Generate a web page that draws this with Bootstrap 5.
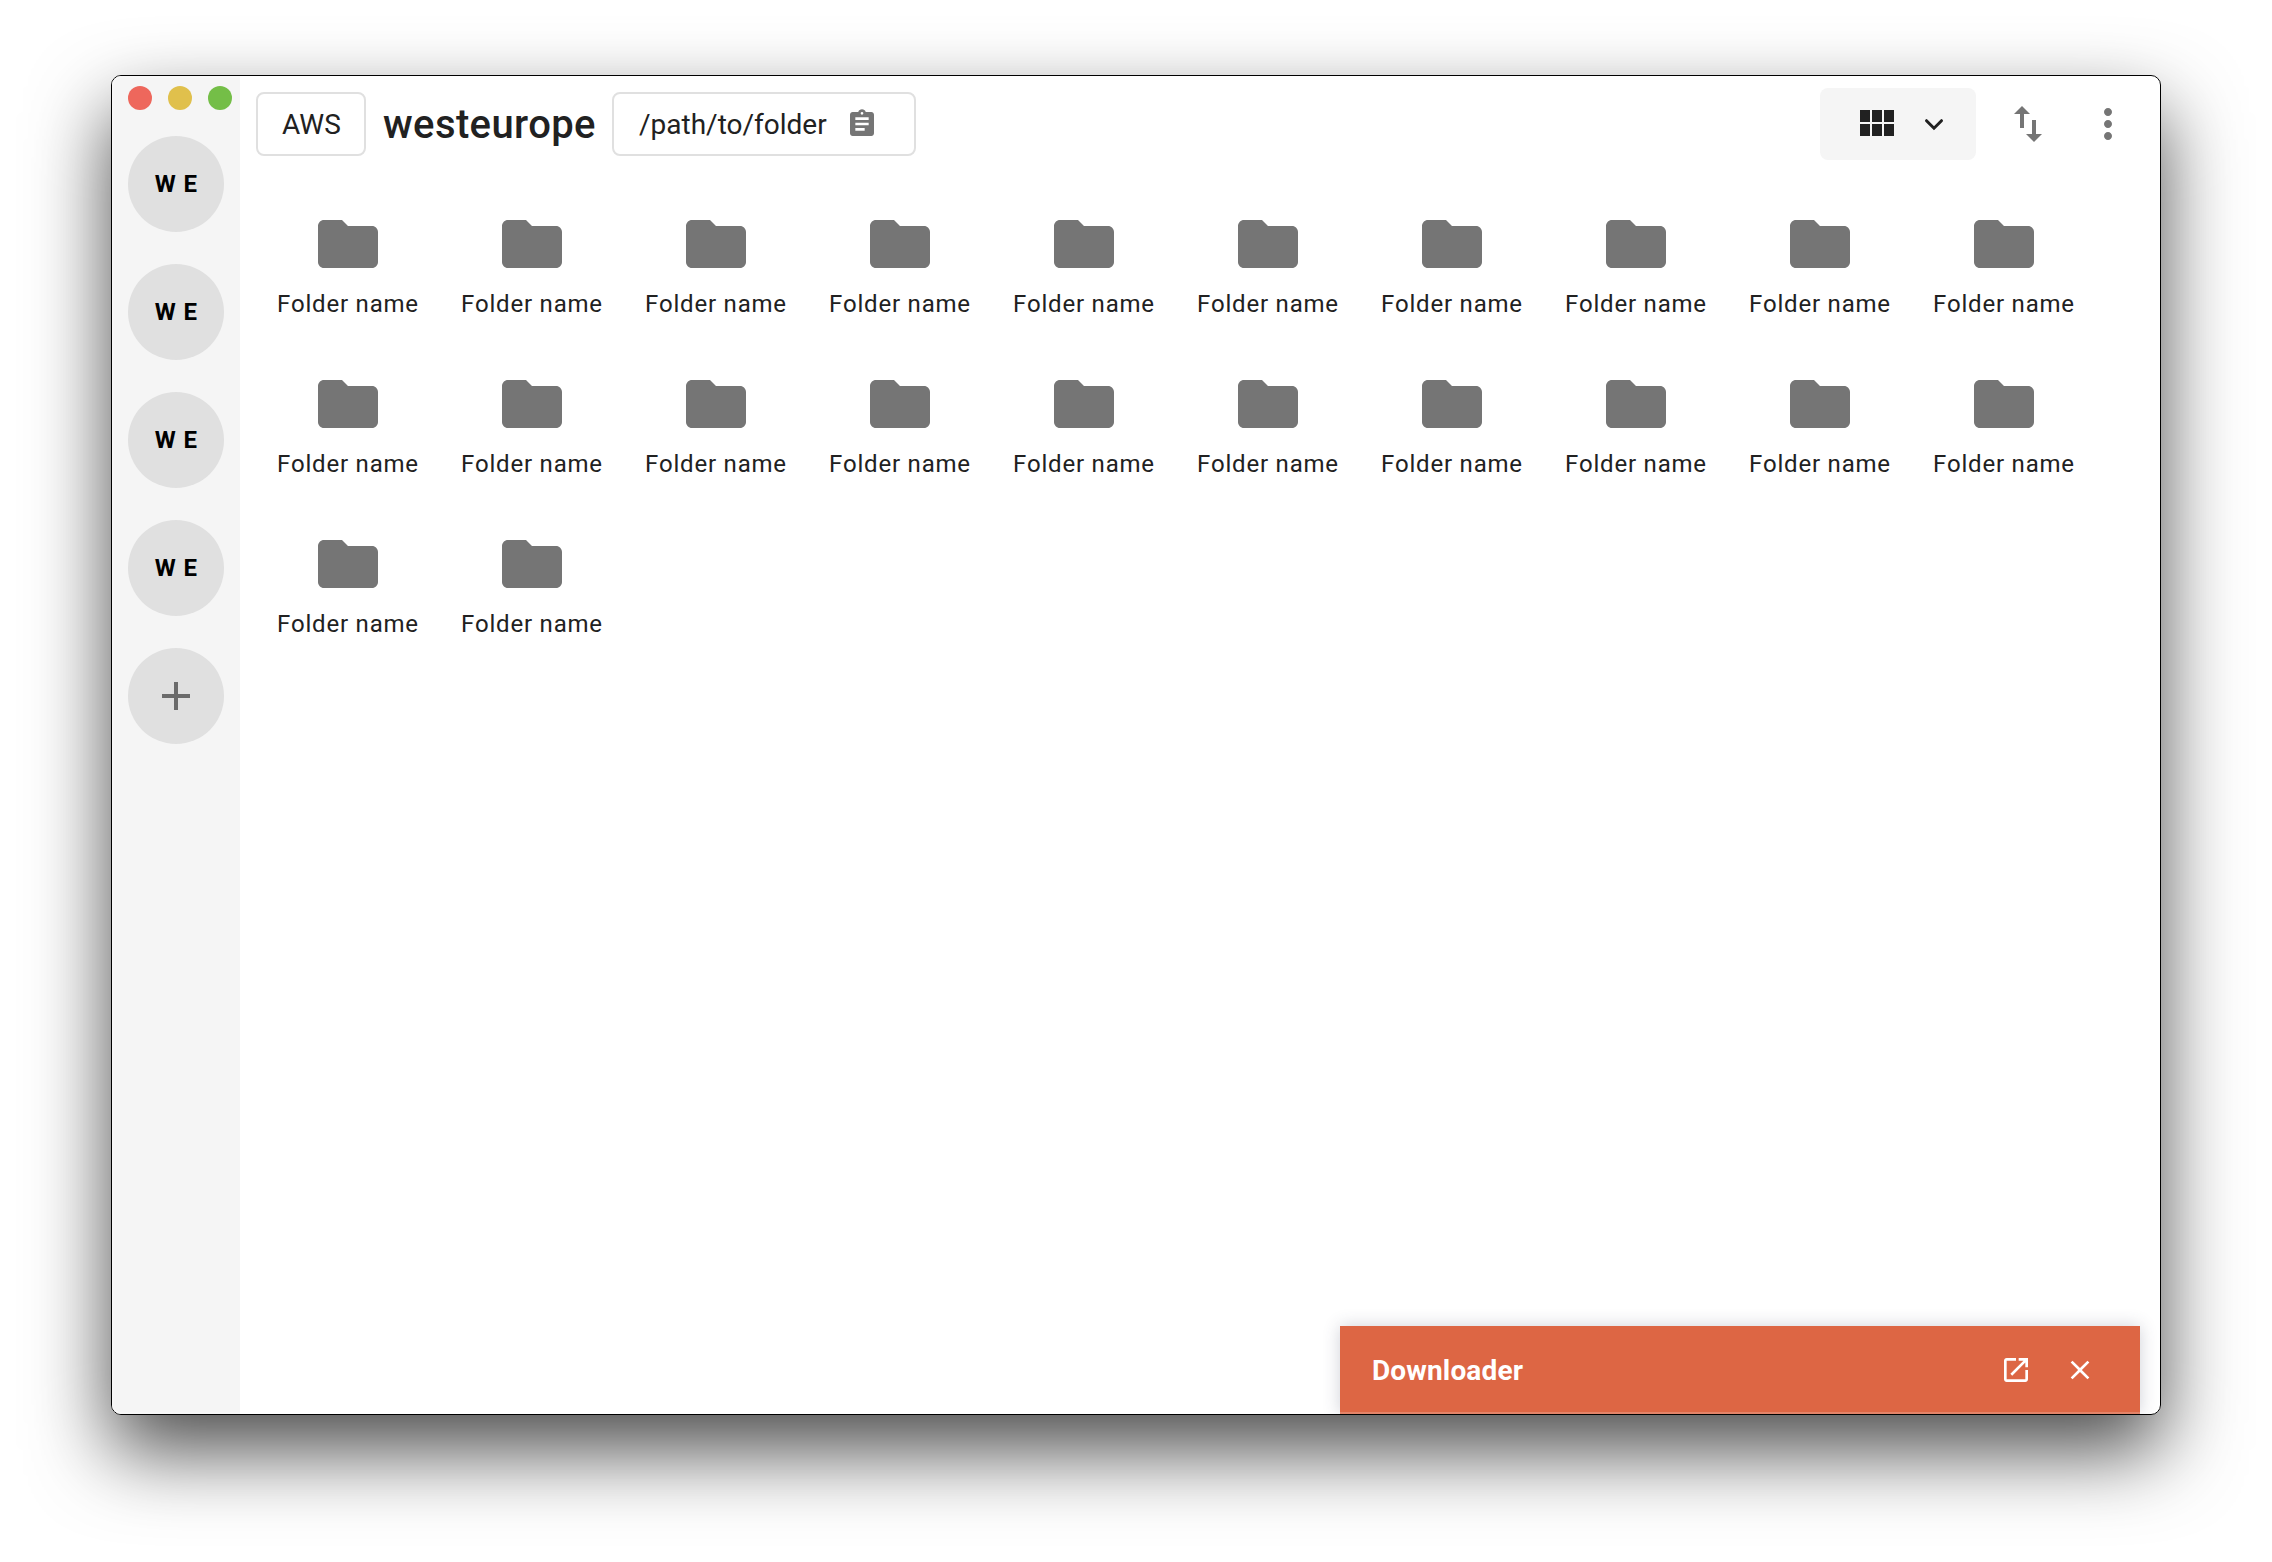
<!DOCTYPE html>
<html lang="en">
<head>
<meta charset="utf-8">
<title>westeurope</title>
<link rel="stylesheet" href="https://cdn.jsdelivr.net/npm/bootstrap@5.3.0/dist/css/bootstrap.min.css">
<style>
body{font-family:Roboto,sans-serif;color:#212121;background:#fff;width:2272px;height:1562px;padding:75px 111px;overflow:hidden}
.app-window{width:2050px;height:1340px;border:1px solid #000;border-radius:10px;box-shadow:0 36px 80px rgba(0,0,0,.7)}
.window-clip{border-radius:9px}
.window-clip::after{content:"";position:absolute;inset:0;border-radius:9px;box-shadow:inset 0 0 0 2px rgba(255,255,255,.2);pointer-events:none}
.sidebar{width:128px;background:#f5f5f5;padding:10px 8px 0 16px}
.light{width:24px;height:24px}
.light-close{background:#ee675c}
.light-min{background:#e0c04c}
.light-zoom{background:#74be47}
.avatars{gap:32px;margin-top:26px}
.avatar{width:96px;height:96px;background:#e0e0e0;color:#000;font-size:24px;font-weight:700;letter-spacing:.3px;word-spacing:1px}
.plus-icon{color:#6b6b6b}
.topbar{padding:12px 28px 0 16px;height:84px}
.outlined{height:64px;border:2px solid #e0e0e0;border-radius:8px;font-size:28px;padding:2px 0 0 24px}
.provider-box{width:110px}
.region-title{width:214px;font-size:40px;font-weight:500;letter-spacing:.4px;margin:0 16px;padding:2px 0 0 1px;line-height:64px}
.path-box{width:304px;padding-left:25px}
.path-box svg{margin:-2px 0 0 19px}
.view-btn{width:156px;height:72px;border-radius:8px;background:#f5f5f5;padding:0 26px 0 32px}
.top-actions .sort-icon{margin-left:28px}
.top-actions .more-icon{margin-left:32px}
.icon-gray{color:#757575}
svg{display:block;fill:currentColor;flex:none}
.tiles{padding:32px 16px 0}
.tile{width:184px;height:160px;padding-top:16px;font-size:24px;letter-spacing:.8px;line-height:32px}
.tile span{margin-top:8px}
.downloader{right:20px;bottom:0;width:800px;height:88px;background:#dd6644;padding:0 44px 0 32px;gap:32px;font-size:28px;box-shadow:0 0 16px rgba(60,64,90,.24)}
.downloader-title{padding-top:2px;letter-spacing:.15px}
</style>
</head>
<body>
<svg class="d-none">
<symbol id="folder" viewBox="0 0 24 24"><path d="M10 4H4c-1.1 0-2 .9-2 2v12c0 1.1.9 2 2 2h16c1.1 0 2-.9 2-2V8c0-1.1-.9-2-2-2h-8l-2-2z"/></symbol>
</svg>
<div class="app-window">
<div class="window-clip position-relative overflow-hidden d-flex h-100">
<aside class="sidebar flex-shrink-0">
<div class="d-flex gap-3">
<span class="light light-close rounded-circle flex-shrink-0"></span>
<span class="light light-min rounded-circle flex-shrink-0"></span>
<span class="light light-zoom rounded-circle flex-shrink-0"></span>
</div>
<div class="avatars d-flex flex-column">
<div class="avatar rounded-circle d-flex align-items-center justify-content-center">W E</div>
<div class="avatar rounded-circle d-flex align-items-center justify-content-center">W E</div>
<div class="avatar rounded-circle d-flex align-items-center justify-content-center">W E</div>
<div class="avatar rounded-circle d-flex align-items-center justify-content-center">W E</div>
<div class="avatar rounded-circle d-flex align-items-center justify-content-center"><svg class="plus-icon" width="48" height="48" viewBox="0 0 24 24"><path d="M19 13h-6v6h-2v-6H5v-2h6V5h2v6h6v2z"/></svg></div>
</div>
</aside>
<main class="flex-grow-1">
<header class="topbar d-flex align-items-center">
<div class="outlined provider-box d-flex align-items-center">AWS</div>
<h1 class="region-title">westeurope</h1>
<div class="outlined path-box d-flex align-items-center"><span>/path/to/folder</span><svg class="icon-gray" width="32" height="32" viewBox="0 0 24 24"><path d="M19 3h-4.18C14.4 1.84 13.3 1 12 1s-2.4.84-2.82 2H5c-1.1 0-2 .9-2 2v14c0 1.1.9 2 2 2h14c1.1 0 2-.9 2-2V5c0-1.1-.9-2-2-2zm-7 0c.55 0 1 .45 1 1s-.45 1-1 1-1-.45-1-1 .45-1 1-1zm2 14H7v-2h7v2zm3-4H7v-2h10v2zm0-4H7V7h10v2z"/></svg></div>
<div class="top-actions d-flex align-items-center ms-auto">
<div class="view-btn d-flex align-items-center justify-content-between"><svg width="48" height="48" viewBox="0 0 24 24"><path d="M4 11h5V5H4v6zm0 7h5v-6H4v6zm6 0h5v-6h-5v6zm6 0h5v-6h-5v6zm-6-7h5V5h-5v6zm6-6v6h5V5h-5z"/></svg><svg width="32" height="32" viewBox="0 0 32 32"><path d="M8.5 12.7l7.5 7.5 7.5-7.5" fill="none" stroke="currentColor" stroke-width="3" stroke-linecap="round"/></svg></div>
<svg class="icon-gray sort-icon" width="48" height="48" viewBox="0 0 24 24"><path d="M16 17.01V10h-2v7.01h-3L15 21l4-3.99h-3zM9 3L5 6.99h3V14h2V6.99h3L9 3z"/></svg>
<svg class="icon-gray more-icon" width="48" height="48" viewBox="0 0 24 24"><path d="M12 8c1.1 0 2-.9 2-2s-.9-2-2-2-2 .9-2 2 .9 2 2 2zm0 2c-1.1 0-2 .9-2 2s.9 2 2 2 2-.9 2-2-.9-2-2-2zm0 6c-1.1 0-2 .9-2 2s.9 2 2 2 2-.9 2-2-.9-2-2-2z"/></svg>
</div>
</header>
<section class="tiles d-flex flex-wrap" id="tiles"></section>
</main>
<div class="downloader position-absolute d-flex align-items-center text-white">
<span class="downloader-title fw-bold me-auto">Downloader</span>
<svg width="32" height="32" viewBox="0 0 24 24"><path d="M19 19H5V5h7V3H5c-1.11 0-2 .9-2 2v14c0 1.1.89 2 2 2h14c1.1 0 2-.9 2-2v-7h-2v7zM14 3v2h3.59l-9.83 9.83 1.41 1.41L19 6.41V10h2V3h-7z"/></svg>
<svg width="32" height="32" viewBox="0 0 24 24"><path d="M19 6.41L17.59 5 12 10.59 6.41 5 5 6.41 10.59 12 5 17.59 6.41 19 12 13.41 17.59 19 19 17.59 13.41 12z"/></svg>
</div>
</div>
</div>
<script src="https://cdn.jsdelivr.net/npm/bootstrap@5.3.0/dist/js/bootstrap.bundle.min.js"></script>
<script>
document.getElementById('tiles').innerHTML='<div class="tile d-flex flex-column align-items-center"><svg class="icon-gray" width="72" height="72"><use href="#folder"/></svg><span>Folder name</span></div>'.repeat(22);
</script>
</body>
</html>
